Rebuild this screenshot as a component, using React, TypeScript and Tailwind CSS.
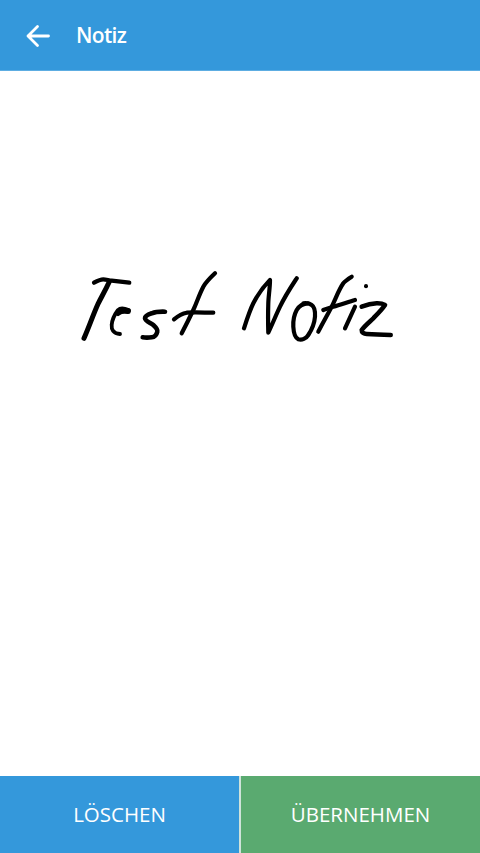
import React from "react";

const font = { fontFamily: '"Open Sans", sans-serif' };

function Sketch() {
  return (
    <svg width="340" height="90" viewBox="70 260 340 90" fill="none" stroke="#000" strokeWidth="4.2" strokeLinecap="round" strokeLinejoin="round" className="block">
      <path d="M94 282.7C97 281 100 279.3 103.3 279.3C106 279.3 109 280.5 111.7 280.7L129.3 282.7" />
      <path d="M109.3 281.7C105 291 102 296 98.3 303.3C93 315 89 327 84 338.3" strokeWidth="5" />
      <path d="M128.3 310C124 308 120.5 307.5 118 310C115 314 112 320 111.7 325C111.3 329 113 333.5 120 334" strokeWidth="3.8" />
      <path d="M118 313C121 310 125 310.5 128 311" strokeWidth="6" />
      <path d="M165 311.7C159 311.5 155 312 151.7 313.3C148 314.5 145 316 145 318.3C145 321 151 323 153.3 325C156 327.5 158 329.5 157.3 331.7C156.5 335 154.5 337 151.7 337.3C148 337.8 145 337.7 142.7 337.3" strokeWidth="4.6" />
      <path d="M215 273.3C210 278 206 282 203.3 286.7C199 295 197 302 193.3 310C189 319 185 327 181.7 333.3" />
      <path d="M174 319.3C178 316 182 313.5 186.7 312.7C195 312 205 312.7 213.3 312.7" />
      <path d="M244 328.3C247 319 250 310 253.3 303.3C258 294 264 286 270 280C270 288 268.5 296 268.3 303.3C268 313 268 323 268.3 332.7C272 325 276 315 280 306.7C285 296 291 287 296.7 278.3" />
      <path d="M308.3 303.3C303 303.5 299 306 296.7 310C294 315 293 321 293.3 326.7C293.6 332 295 338 298.3 339.3C302 340.5 306 338.5 308.3 335C312 329.5 314.5 323 315 316.7C315.3 311.5 314 306.5 311.7 305C309 303 306 303 303.3 303.3" />
      <path d="M351.7 276.7C348 279 345.5 280.5 343.3 283.3C339 289.5 336.5 296.5 333.3 303.3C329 312.5 323 322 318.3 331.7" />
      <path d="M323.3 310C327 308.5 330 307.5 333.3 306.7C340 305 348 302 355 300" />
      <path d="M355 306.7L345 328.3" />
      <path d="M366 286L366 286.2" strokeWidth="4" />
      <path d="M361.7 306.7C366 305 371 303.5 376.7 303.3C380 303.2 383 303.8 385 305C382 309.5 377.5 314 373.3 318.3C369.5 322 365 325.5 361.7 330C361.5 332.5 364 333.8 366.7 334C374 334.5 382 334.8 390.7 335" strokeWidth="4.6" />
    </svg>
  );
}

export default function App() {
  return (
    <div className="flex h-[853px] w-[480px] flex-col bg-white" style={font}>
      <header className="flex h-[71px] items-center border-b border-[#5dade2] bg-[#3498db] pl-[25px] pt-[2px] text-white">
        <svg width="26" height="24" viewBox="0 0 26 24" fill="none" stroke="#fff" strokeWidth="2.8" strokeLinecap="round" strokeLinejoin="round" className="block">
          <path d="M3 12H23.5M12.5 2.5L3 12L12.5 21.5" />
        </svg>
        <h1 className="ml-[25px] text-[21px] font-semibold tracking-[-0.65px]">Notiz</h1>
      </header>
      <main className="flex-1 pl-[70px] pt-[189px]">
        <Sketch />
      </main>
      <footer className="flex h-[77px]">
        <button className="flex-1 border-r-2 border-[#cfe3da] bg-[#3498db] text-[20.5px] text-white">LÖSCHEN</button>
        <button className="flex-1 bg-[#5aaa70] text-[20.5px] text-white">ÜBERNEHMEN</button>
      </footer>
    </div>
  );
}
